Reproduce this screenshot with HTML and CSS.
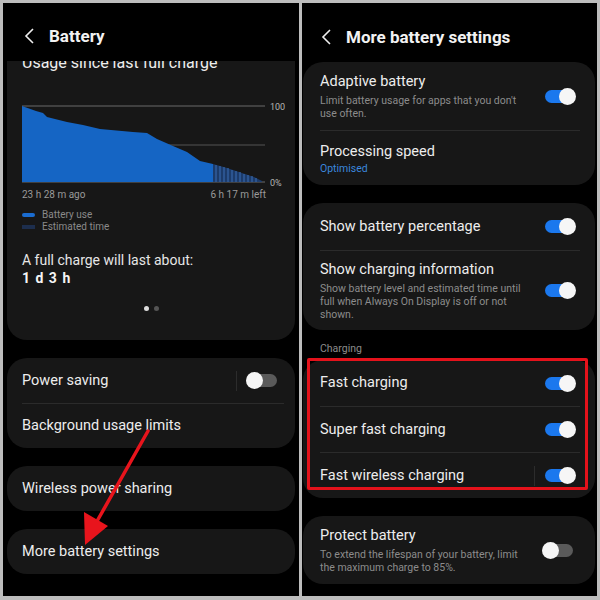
FILE: index.html
```html
<!DOCTYPE html>
<html lang="en">
<head>
    <meta charset="UTF-8">
    <title>Battery settings</title>
    <link rel="stylesheet" href="styles.css">
</head>
<body>
    <div class="frame">

        <!-- left screen -->
        <div class="phone">
            <div class="topbar">
                <svg class="back" width="12" height="16" viewBox="0 0 12 16"><path d="M9 1 L2 8 L9 15" fill="none" stroke="#eee" stroke-width="1.6"/></svg>
                <span class="title">Battery</span>
            </div>
            <div class="scroll">
                <div class="card usage">
                    <div class="usage-title">Usage since last full charge</div>
                    <svg class="chart" width="268" height="92" viewBox="0 0 268 92">
                        <line x1="0" y1="1" x2="243" y2="1" stroke="#6b6b6b" stroke-width="1"/>
                        <line x1="0" y1="40" x2="243" y2="40" stroke="#555" stroke-width="1"/>
                        <line x1="0" y1="77" x2="243" y2="77" stroke="#6b6b6b" stroke-width="1"/>
                        <path d="M0 1 L14 6 L21 8 L25 12 L45 17 L61 20 L78 24 L111 27 L125 28 L135 34 L151 41 L165 47 L178 56 L191 59 L191 77 L0 77 Z" fill="#1565c4"/>
                        <path d="M191 59 L205 63 L220 68 L232 72 L240 76 L240 77 L191 77 Z" fill="#1d3f73" opacity="0.9"/>
                        <g stroke="#3a6fb5" stroke-width="1">
                            <line x1="194" y1="60" x2="194" y2="77"/>
                            <line x1="198" y1="61" x2="198" y2="77"/>
                            <line x1="202" y1="62" x2="202" y2="77"/>
                            <line x1="206" y1="63" x2="206" y2="77"/>
                            <line x1="210" y1="65" x2="210" y2="77"/>
                            <line x1="214" y1="66" x2="214" y2="77"/>
                            <line x1="218" y1="67" x2="218" y2="77"/>
                            <line x1="222" y1="69" x2="222" y2="77"/>
                            <line x1="226" y1="70" x2="226" y2="77"/>
                            <line x1="230" y1="71" x2="230" y2="77"/>
                            <line x1="234" y1="73" x2="234" y2="77"/>
                        </g>
                        <text x="248" y="5" class="axis">100</text>
                        <text x="248" y="81" class="axis">0%</text>
                    </svg>
                    <div class="chart-labels">
                        <span>23 h 28 m ago</span>
                        <span>6 h 17 m left</span>
                    </div>
                    <div class="legend">
                        <div class="legend-row"><span class="swatch use"></span>Battery use</div>
                        <div class="legend-row"><span class="swatch est"></span>Estimated time</div>
                    </div>
                    <div class="last">A full charge will last about:</div>
                    <div class="last-value">1 d 3 h</div>
                    <div class="dots"><span class="dot on"></span><span class="dot"></span></div>
                </div>

                <div class="card">
                    <div class="row">
                        <div class="label">Power saving</div>
                        <span class="sep"></span>
                        <span class="toggle"></span>
                    </div>
                    <div class="row">
                        <div class="label">Background usage limits</div>
                    </div>
                </div>

                <div class="card">
                    <div class="row">
                        <div class="label">Wireless power sharing</div>
                    </div>
                </div>

                <div class="card">
                    <div class="row">
                        <div class="label">More battery settings</div>
                    </div>
                </div>
            </div>

            <svg class="arrow" width="300" height="600" viewBox="0 0 300 600">
                <line x1="145" y1="431" x2="93" y2="523" stroke="#e8141c" stroke-width="3.5" stroke-linecap="round"/>
                <path d="M82 545 L81 512 L105 526 Z" fill="#e8141c"/>
            </svg>
        </div>

        <!-- right screen -->
        <div class="phone right">
            <div class="topbar">
                <svg class="back" width="12" height="16" viewBox="0 0 12 16"><path d="M9 1 L2 8 L9 15" fill="none" stroke="#eee" stroke-width="1.6"/></svg>
                <span class="title">More battery settings</span>
            </div>
            <div class="scroll">
                <div class="card">
                    <div class="row tall">
                        <div class="text">
                            <div class="label">Adaptive battery</div>
                            <div class="sub">Limit battery usage for apps that you don't use often.</div>
                        </div>
                        <span class="toggle on"></span>
                    </div>
                    <div class="row mid">
                        <div class="text">
                            <div class="label">Processing speed</div>
                            <div class="sub blue">Optimised</div>
                        </div>
                    </div>
                </div>

                <div class="card">
                    <div class="row r47">
                        <div class="label">Show battery percentage</div>
                        <span class="toggle on"></span>
                    </div>
                    <div class="row tall3">
                        <div class="text">
                            <div class="label">Show charging information</div>
                            <div class="sub">Show battery level and estimated time until full when Always On Display is off or not shown.</div>
                        </div>
                        <span class="toggle on"></span>
                    </div>
                </div>

                <div class="section">Charging</div>

                <div class="card charging">
                    <div class="row r46">
                        <div class="label">Fast charging</div>
                        <span class="toggle on"></span>
                    </div>
                    <div class="row r46">
                        <div class="label">Super fast charging</div>
                        <span class="toggle on"></span>
                    </div>
                    <div class="row r46">
                        <div class="label">Fast wireless charging</div>
                        <span class="sep"></span>
                        <span class="toggle on"></span>
                    </div>
                    <div class="highlight"></div>
                </div>

                <div class="card">
                    <div class="row tall">
                        <div class="text">
                            <div class="label">Protect battery</div>
                            <div class="sub">To extend the lifespan of your battery, limit the maximum charge to 85%.</div>
                        </div>
                        <span class="toggle"></span>
                    </div>
                </div>
            </div>
        </div>

    </div>
</body>
</html>
```

FILE: styles.css
```css
* {
    box-sizing: border-box;
}

body {
    margin: 0;
    padding: 0;
    background: #c9c9c9;
    font-family: Roboto, "Noto Sans", sans-serif;
}

.frame {
    width: 600px;
    height: 600px;
    display: flex;
    gap: 3px;
    padding: 3px 3px 4px 3px;
    background: #bdbdbd;
}

.phone {
    position: relative;
    width: 296px;
    background: #000;
    display: flex;
    flex-direction: column;
    overflow: hidden;
}

.phone.right {
    width: 295px;
}

.topbar {
    height: 58px;
    flex-shrink: 0;
    display: flex;
    align-items: center;
    padding-left: 21px;
    padding-top: 8px;
    background: #000;
    position: relative;
    z-index: 2;
}

.right .topbar {
    padding-left: 19px;
    height: 59px;
}

.back {
    margin-right: 13px;
}

.title {
    color: #f2f2f2;
    font-size: 17px;
    font-weight: 700;
}

.scroll {
    display: flex;
    flex-direction: column;
    gap: 18px;
    padding: 0 4px 0 4px;
}

.right .scroll {
    padding: 0 2px 0 1px;
}

.card {
    background: #171717;
    border-radius: 20px;
    position: relative;
}

.usage {
    margin-top: -17px;
    padding: 0 15px 0 15px;
    height: 296px;
    border-radius: 0 0 20px 20px;
}

.usage-title {
    color: #eee;
    font-size: 16px;
    line-height: 20px;
    padding-top: 9px;
}

.chart {
    display: block;
    margin-top: 32px;
    overflow: visible;
}

.axis {
    fill: #b5b5b5;
    font-size: 9px;
    font-family: Roboto, sans-serif;
}

.chart-labels {
    display: flex;
    justify-content: space-between;
    width: 244px;
    color: #9a9a9a;
    font-size: 10px;
    margin-top: -8px;
}

.legend {
    margin-top: 9px;
    color: #8a8a8a;
    font-size: 10px;
    line-height: 12px;
}

.legend-row {
    display: flex;
    align-items: center;
}

.swatch {
    width: 13px;
    height: 4px;
    border-radius: 2px;
    margin-right: 7px;
}

.swatch.use {
    background: #1a6cd0;
}

.swatch.est {
    background: #1d2e4d;
    border-radius: 0;
}

.last {
    margin-top: 18px;
    color: #e6e6e6;
    font-size: 14px;
    line-height: 18px;
}

.last-value {
    color: #f5f5f5;
    font-size: 14px;
    font-weight: 700;
    letter-spacing: 1px;
    line-height: 18px;
}

.dots {
    display: flex;
    justify-content: center;
    gap: 5px;
    margin-top: 19px;
}

.dot {
    width: 5px;
    height: 5px;
    border-radius: 50%;
    background: #555;
}

.dot.on {
    background: #ddd;
}

.row {
    display: flex;
    align-items: center;
    height: 45px;
    margin: 0 11px 0 15px;
    border-top: 1px solid #2b2b2b;
}

.row:first-child {
    border-top: none;
}

.right .row {
    margin: 0 15px 0 17px;
}

.row.r46 {
    height: 46px;
}

.row.r47 {
    height: 47px;
}

.row.tall {
    height: 68px;
}

.row.mid {
    height: 55px;
}

.row.tall3 {
    height: 80px;
}

.text {
    flex: 1;
    padding-right: 20px;
}

.label {
    flex: 1;
    color: #ededed;
    font-size: 14.5px;
    line-height: 20px;
}

.sub {
    color: #8c8c8c;
    font-size: 10.5px;
    line-height: 13px;
    margin-top: 2px;
}

.sub.blue {
    color: #3a86dd;
    margin-top: 0;
}

.sep {
    width: 1px;
    height: 20px;
    background: #2c2c2c;
    margin-right: 10px;
}

.toggle {
    position: relative;
    width: 30px;
    height: 13px;
    border-radius: 7px;
    background: #5a5a5a;
    flex-shrink: 0;
    margin-right: 7px;
}

.toggle::after {
    content: "";
    position: absolute;
    left: -1px;
    top: -2px;
    width: 17px;
    height: 17px;
    border-radius: 50%;
    background: #f6f6f6;
}

.toggle.on {
    background: #1b78ee;
    margin-right: 5px;
}

.toggle.on::after {
    left: auto;
    right: -1px;
}

.section {
    color: #8c8c8c;
    font-size: 10.5px;
    line-height: 12px;
    padding-left: 17px;
    margin: -5px 0 -13px 0;
}

.highlight {
    position: absolute;
    top: -2px;
    left: 4px;
    right: 7px;
    bottom: 8px;
    border: 3px solid #e4121b;
    border-radius: 2px;
}

.arrow {
    position: absolute;
    left: 0;
    top: -3px;
    pointer-events: none;
}
```
